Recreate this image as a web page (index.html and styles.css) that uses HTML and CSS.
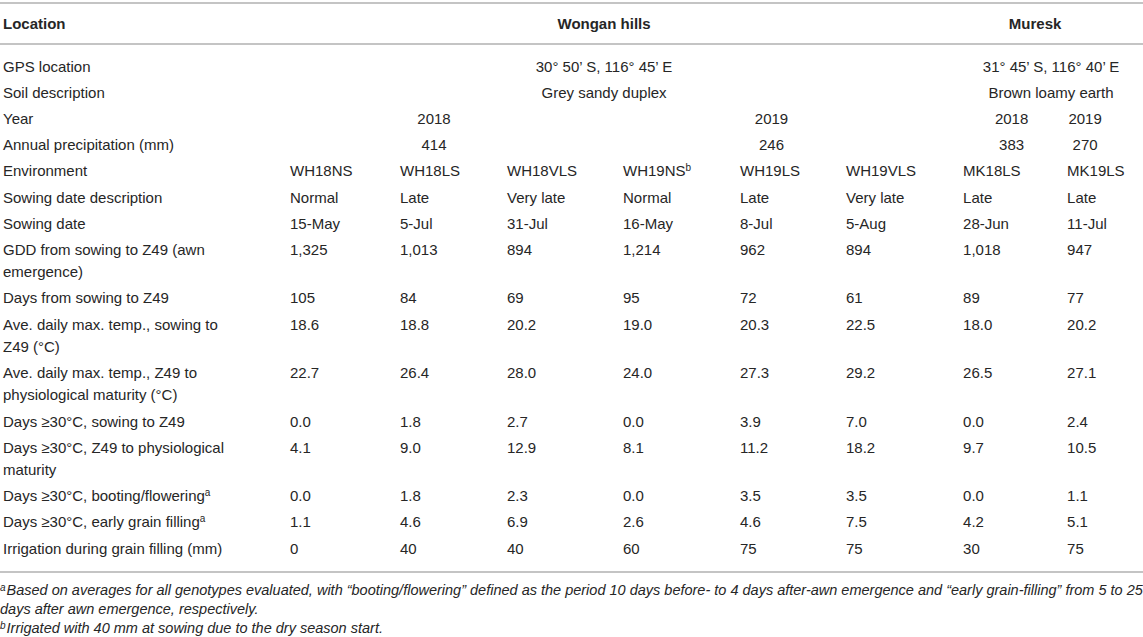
FILE: index.html
```html
<!DOCTYPE html>
<html lang="en">
<head>
<meta charset="utf-8">
<title>Table</title>
<link rel="stylesheet" href="styles.css">
</head>
<body>
<div class="page">
<table class="data">
  <colgroup>
    <col class="c-label">
    <col class="c-wh18ns">
    <col class="c-wh18ls">
    <col class="c-wh18vls">
    <col class="c-wh19ns">
    <col class="c-wh19ls">
    <col class="c-wh19vls">
    <col class="c-mk18">
    <col class="c-mk19">
  </colgroup>
  <thead>
    <tr>
      <th class="lbl">Location</th>
      <th colspan="6" class="ctr pr42">Wongan hills</th>
      <th colspan="2" class="ctr pr36">Muresk</th>
    </tr>
  </thead>
  <tbody>
    <tr class="first">
      <td class="lbl">GPS location</td>
      <td colspan="6" class="ctr pr42">30° 50’ S, 116° 45’ E</td>
      <td colspan="2" class="ctr pr4">31° 45’ S, 116° 40’ E</td>
    </tr>
    <tr>
      <td class="lbl">Soil description</td>
      <td colspan="6" class="ctr pr42">Grey sandy duplex</td>
      <td colspan="2" class="ctr pr4">Brown loamy earth</td>
    </tr>
    <tr>
      <td class="lbl">Year</td>
      <td colspan="3" class="ctr pr42">2018</td>
      <td colspan="3" class="ctr pr40">2019</td>
      <td class="ctr pr4">2018</td>
      <td class="ctr pr40">2019</td>
    </tr>
    <tr>
      <td class="lbl">Annual precipitation (mm)</td>
      <td colspan="3" class="ctr pr42">414</td>
      <td colspan="3" class="ctr pr40">246</td>
      <td class="ctr pr4">383</td>
      <td class="ctr pr40">270</td>
    </tr>
    <tr>
      <td class="lbl">Environment</td>
      <td>WH18NS</td><td>WH18LS</td><td>WH18VLS</td><td>WH19NS<sup>b</sup></td><td>WH19LS</td><td>WH19VLS</td><td>MK18LS</td><td>MK19LS</td>
    </tr>
    <tr>
      <td class="lbl">Sowing date description</td>
      <td>Normal</td><td>Late</td><td>Very late</td><td>Normal</td><td>Late</td><td>Very late</td><td>Late</td><td>Late</td>
    </tr>
    <tr>
      <td class="lbl">Sowing date</td>
      <td>15-May</td><td>5-Jul</td><td>31-Jul</td><td>16-May</td><td>8-Jul</td><td>5-Aug</td><td>28-Jun</td><td>11-Jul</td>
    </tr>
    <tr>
      <td class="lbl">GDD from sowing to Z49 (awn emergence)</td>
      <td>1,325</td><td>1,013</td><td>894</td><td>1,214</td><td>962</td><td>894</td><td>1,018</td><td>947</td>
    </tr>
    <tr>
      <td class="lbl">Days from sowing to Z49</td>
      <td>105</td><td>84</td><td>69</td><td>95</td><td>72</td><td>61</td><td>89</td><td>77</td>
    </tr>
    <tr>
      <td class="lbl">Ave. daily max. temp., sowing to Z49 (°C)</td>
      <td>18.6</td><td>18.8</td><td>20.2</td><td>19.0</td><td>20.3</td><td>22.5</td><td>18.0</td><td>20.2</td>
    </tr>
    <tr>
      <td class="lbl">Ave. daily max. temp., Z49 to physiological maturity (°C)</td>
      <td>22.7</td><td>26.4</td><td>28.0</td><td>24.0</td><td>27.3</td><td>29.2</td><td>26.5</td><td>27.1</td>
    </tr>
    <tr>
      <td class="lbl">Days ≥30°C, sowing to Z49</td>
      <td>0.0</td><td>1.8</td><td>2.7</td><td>0.0</td><td>3.9</td><td>7.0</td><td>0.0</td><td>2.4</td>
    </tr>
    <tr>
      <td class="lbl">Days ≥30°C, Z49 to physiological maturity</td>
      <td>4.1</td><td>9.0</td><td>12.9</td><td>8.1</td><td>11.2</td><td>18.2</td><td>9.7</td><td>10.5</td>
    </tr>
    <tr>
      <td class="lbl">Days ≥30°C, booting/flowering<sup>a</sup></td>
      <td>0.0</td><td>1.8</td><td>2.3</td><td>0.0</td><td>3.5</td><td>3.5</td><td>0.0</td><td>1.1</td>
    </tr>
    <tr>
      <td class="lbl">Days ≥30°C, early grain filling<sup>a</sup></td>
      <td>1.1</td><td>4.6</td><td>6.9</td><td>2.6</td><td>4.6</td><td>7.5</td><td>4.2</td><td>5.1</td>
    </tr>
    <tr class="last">
      <td class="lbl">Irrigation during grain filling (mm)</td>
      <td>0</td><td>40</td><td>40</td><td>60</td><td>75</td><td>75</td><td>30</td><td>75</td>
    </tr>
  </tbody>
</table>
<div class="notes">
  <p class="note"><sup>a</sup>Based on averages for all genotypes evaluated, with “booting/flowering” defined as the period 10 days before- to 4 days after-awn emergence and “early grain-filling” from 5 to 25 days after awn emergence, respectively.</p>
  <p class="note"><sup>b</sup>Irrigated with 40 mm at sowing due to the dry season start.</p>
</div>
</div>
</body>
</html>
```
FILE: styles.css
```css
html, body {
  margin: 0;
  padding: 0;
  background: #ffffff;
}
body {
  font-family: "Liberation Sans", Arial, Helvetica, sans-serif;
  color: #262626;
}
.page {
  width: 1143px;
  padding-top: 2px;
}
.data {
  width: 1143px;
  border-collapse: collapse;
  table-layout: fixed;
  font-size: 15px;
  line-height: 22.3px;
}
.c-label { width: 287px; }
.c-wh18ns { width: 110px; }
.c-wh18ls { width: 107px; }
.c-wh18vls { width: 116px; }
.c-wh19ns { width: 117px; }
.c-wh19ls { width: 106px; }
.c-wh19vls { width: 117px; }
.c-mk18 { width: 104px; }
.c-mk19 { width: 79px; }

.data thead tr {
  border-top: 2px solid #c4c4c4;
  border-bottom: 2px solid #c4c4c4;
}
.data th {
  font-weight: bold;
  text-align: left;
  padding: 8.5px 4px 8.5px 3px;
  vertical-align: middle;
}
.data td {
  padding: 1.95px 4px 1.95px 3px;
  text-align: left;
  vertical-align: top;
  white-space: nowrap;
}
.data td.lbl {
  white-space: normal;
  padding-right: 42px;
}
.data .ctr { text-align: center; }
.data .pr42 { padding-right: 42px; }
.data .pr40 { padding-right: 40px; }
.data .pr36 { padding-right: 36px; }
.data .pr4 { padding-right: 4px; }

.data tr.first td { padding-top: 10.5px; }
.data tr.last td { padding-bottom: 11px; }
.data tbody tr.last { border-bottom: 2px solid #c4c4c4; }

.data sup {
  font-size: 10px;
  line-height: 0;
  vertical-align: 5px;
}
.notes {
  padding-top: 8px;
  font-size: 14.5px;
  line-height: 19px;
  font-style: italic;
}
.note {
  margin: 0;
}
.note sup {
  font-size: 10px;
  line-height: 0;
  vertical-align: 4px;
  margin-right: 1px;
}
```
